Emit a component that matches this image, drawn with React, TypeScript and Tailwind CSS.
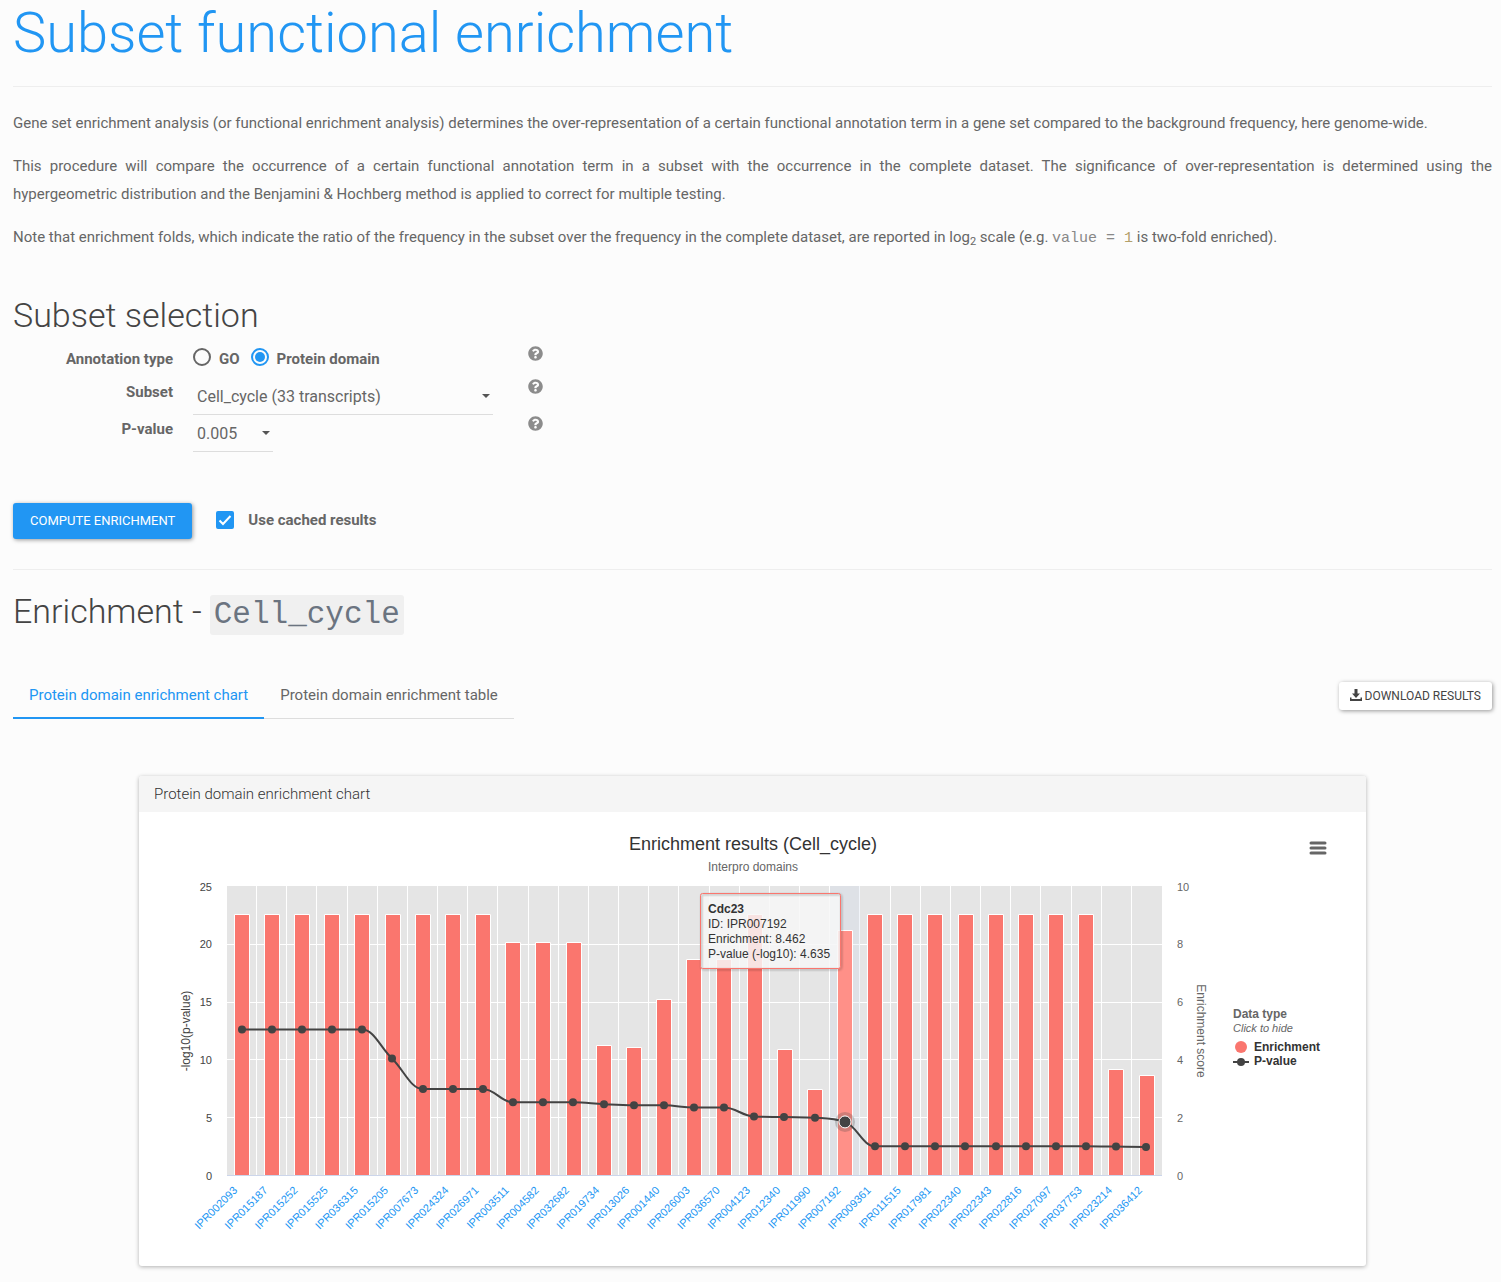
import { useState } from 'react';
import { FaQuestionCircle } from 'react-icons/fa';

type Domain = { id: string; enrichment: number; pValue: number };

const DOMAINS: Domain[] = [
  { id: 'IPR002093', enrichment: 9.03, pValue: 12.63 },
  { id: 'IPR015187', enrichment: 9.03, pValue: 12.63 },
  { id: 'IPR015252', enrichment: 9.03, pValue: 12.63 },
  { id: 'IPR015525', enrichment: 9.03, pValue: 12.63 },
  { id: 'IPR036315', enrichment: 9.03, pValue: 12.63 },
  { id: 'IPR015205', enrichment: 9.03, pValue: 10.12 },
  { id: 'IPR007673', enrichment: 9.03, pValue: 7.48 },
  { id: 'IPR024324', enrichment: 9.03, pValue: 7.48 },
  { id: 'IPR026971', enrichment: 9.03, pValue: 7.48 },
  { id: 'IPR003511', enrichment: 8.05, pValue: 6.33 },
  { id: 'IPR004582', enrichment: 8.05, pValue: 6.33 },
  { id: 'IPR032682', enrichment: 8.05, pValue: 6.33 },
  { id: 'IPR019734', enrichment: 4.49, pValue: 6.16 },
  { id: 'IPR013026', enrichment: 4.42, pValue: 6.07 },
  { id: 'IPR001440', enrichment: 6.08, pValue: 6.07 },
  { id: 'IPR026003', enrichment: 7.46, pValue: 5.88 },
  { id: 'IPR036570', enrichment: 7.46, pValue: 5.88 },
  { id: 'IPR004123', enrichment: 9.03, pValue: 5.1 },
  { id: 'IPR012340', enrichment: 4.35, pValue: 5.05 },
  { id: 'IPR011990', enrichment: 2.96, pValue: 5.0 },
  { id: 'IPR007192', enrichment: 8.462, pValue: 4.635 },
  { id: 'IPR009361', enrichment: 9.03, pValue: 2.52 },
  { id: 'IPR011515', enrichment: 9.03, pValue: 2.52 },
  { id: 'IPR017981', enrichment: 9.03, pValue: 2.52 },
  { id: 'IPR022340', enrichment: 9.03, pValue: 2.52 },
  { id: 'IPR022343', enrichment: 9.03, pValue: 2.52 },
  { id: 'IPR022816', enrichment: 9.03, pValue: 2.52 },
  { id: 'IPR027097', enrichment: 9.03, pValue: 2.52 },
  { id: 'IPR037753', enrichment: 9.03, pValue: 2.52 },
  { id: 'IPR023214', enrichment: 3.66, pValue: 2.5 },
  { id: 'IPR036412', enrichment: 3.45, pValue: 2.47 },
];

const ACTIVE = 20;

const PLOT = { left: 88, top: 74, width: 935, height: 289 };
const BOTTOM = PLOT.top + PLOT.height;
const STEP = PLOT.width / DOMAINS.length;

const center = (index: number) => PLOT.left + STEP * (index + 0.5);
const scoreY = (value: number) => BOTTOM + 0.5 - (value / 10) * PLOT.height;
const pValueY = (value: number) => BOTTOM + 0.5 - (value / 25) * PLOT.height;

// Smooth line that never overshoots its neighbouring points.
function splinePath(points: { x: number; y: number }[]) {
  const smoothing = 1.5;
  const denom = smoothing + 1;
  let path = `M ${points[0].x} ${points[0].y}`;
  let handle = points[0];

  for (let i = 1; i < points.length; i++) {
    const prev = points[i - 1];
    const point = points[i];
    const next = points[i + 1];
    let left = point;
    let right = point;

    if (next) {
      const leftX = (smoothing * point.x + prev.x) / denom;
      let leftY = (smoothing * point.y + prev.y) / denom;
      const rightX = (smoothing * point.x + next.x) / denom;
      let rightY = (smoothing * point.y + next.y) / denom;
      const correction =
        ((rightY - leftY) * (rightX - point.x)) / (rightX - leftX) +
        point.y -
        rightY;
      leftY += correction;
      rightY += correction;

      if (leftY > prev.y && leftY > point.y) {
        leftY = Math.max(prev.y, point.y);
        rightY = 2 * point.y - leftY;
      } else if (leftY < prev.y && leftY < point.y) {
        leftY = Math.min(prev.y, point.y);
        rightY = 2 * point.y - leftY;
      }
      if (rightY > next.y && rightY > point.y) {
        rightY = Math.max(next.y, point.y);
        leftY = 2 * point.y - rightY;
      } else if (rightY < next.y && rightY < point.y) {
        rightY = Math.min(next.y, point.y);
        leftY = 2 * point.y - rightY;
      }
      left = { x: leftX, y: leftY };
      right = { x: rightX, y: rightY };
    }

    path += ` C ${handle.x} ${handle.y} ${left.x} ${left.y} ${point.x} ${point.y}`;
    handle = right;
  }
  return path;
}

function EnrichmentChart() {
  const [showScore, setShowScore] = useState(true);
  const [showPValue, setShowPValue] = useState(true);

  const points = DOMAINS.map((domain, i) => ({
    x: Math.floor(center(i)),
    y: pValueY(domain.pValue),
  }));
  const active = points[ACTIVE];

  return (
    <svg
      aria-label="Enrichment results (Cell_cycle)"
      className="block w-full font-['Liberation_Sans',Arial,sans-serif]"
      viewBox="0 0 1227 454"
    >
      <text className="fill-[#333] text-[18px]" textAnchor="middle" x="614" y="38">
        Enrichment results (Cell_cycle)
      </text>
      <text className="fill-[#666] text-[12px]" textAnchor="middle" x="614" y="59">
        Interpro domains
      </text>

      <rect
        fill="#e5e5e5"
        height={PLOT.height}
        width={PLOT.width}
        x={PLOT.left}
        y={PLOT.top}
      />
      <g stroke="#fff">
        {DOMAINS.slice(1).map((domain, i) => {
          const x = Math.round(PLOT.left + STEP * (i + 1)) - 0.5;
          return <line key={domain.id} x1={x} x2={x} y1={PLOT.top} y2={BOTTOM} />;
        })}
        {[5, 10, 15, 20].map((tick) => {
          const y = Math.floor(pValueY(tick)) + 0.5;
          return (
            <line
              key={tick}
              x1={PLOT.left}
              x2={PLOT.left + PLOT.width}
              y1={y}
              y2={y}
            />
          );
        })}
      </g>
      <rect
        fill="#ccd6eb"
        fillOpacity="0.25"
        height={PLOT.height}
        width="30"
        x={Math.floor(center(ACTIVE) - 15)}
        y={PLOT.top}
      />
      <line
        stroke="#ccd6eb"
        x1={PLOT.left}
        x2={PLOT.left + PLOT.width}
        y1={BOTTOM + 0.5}
        y2={BOTTOM + 0.5}
      />

      {showScore &&
        DOMAINS.map((domain, i) => {
          const x = Math.floor(center(i) - 7.8) + 0.5;
          const y = Math.floor(scoreY(domain.enrichment)) + 0.5;
          return (
            <g key={domain.id}>
              <rect
                fill={i === ACTIVE ? '#ff9088' : '#fa766e'}
                height={BOTTOM - y}
                width="15"
                x={x}
                y={y}
              />
              <path
                d={`M ${x} ${BOTTOM} V ${y} H ${x + 15} V ${BOTTOM}`}
                fill="none"
                stroke="#fff"
              />
            </g>
          );
        })}

      {showPValue && (
        <g>
          <path
            d={splinePath(points)}
            fill="none"
            stroke="#434343"
            strokeWidth="2"
          />
          {points.map((point) => (
            <circle cx={point.x} cy={point.y} fill="#434343" key={point.x} r="4" />
          ))}
          <circle
            cx={active.x}
            cy={active.y}
            fill="#434343"
            fillOpacity="0.25"
            r="10"
          />
          <circle
            cx={active.x}
            cy={active.y}
            fill="#434343"
            r="6"
            stroke="#fff"
          />
        </g>
      )}

      <g className="fill-[#444] text-[11px]" textAnchor="end">
        {[0, 5, 10, 15, 20, 25].map((tick) => (
          <text key={tick} x="73" y={Math.round(pValueY(tick)) + 4}>
            {tick}
          </text>
        ))}
      </g>
      <g className="fill-[#666] text-[11px]">
        {[0, 2, 4, 6, 8, 10].map((tick) => (
          <text key={tick} x="1038" y={Math.round(scoreY(tick)) + 4}>
            {tick}
          </text>
        ))}
      </g>
      <text
        className="fill-[#444] text-[12px]"
        textAnchor="middle"
        transform="translate(51 219) rotate(-90)"
      >
        -log10(p-value)
      </text>
      <text
        className="fill-[#666] text-[12px]"
        textAnchor="middle"
        transform="translate(1058 219) rotate(90)"
      >
        Enrichment score
      </text>

      <g className="fill-[#2196f3] text-[11px]" textAnchor="end">
        {DOMAINS.map((domain, i) => (
          <a href={`#${domain.id}`} key={domain.id}>
            <text transform={`translate(${center(i) - 4} 379) rotate(-45)`}>
              {domain.id}
            </text>
          </a>
        ))}
      </g>

      <g>
        <rect
          fill="#f7f7f7"
          fillOpacity="0.85"
          height="75"
          rx="2"
          width="140"
          x="561.5"
          y="81.5"
        />
        <rect
          className="drop-shadow-[1px_1px_1px_rgba(0,0,0,0.4)]"
          fill="none"
          height="75"
          rx="2"
          stroke="#fa766e"
          width="140"
          x="561.5"
          y="81.5"
        />
        <g className="fill-[#333] text-[12px]">
          <text className="font-bold" x="569" y="101">
            Cdc23
          </text>
          <text x="569" y="116">
            ID: IPR007192
          </text>
          <text x="569" y="131">
            Enrichment: 8.462
          </text>
          <text x="569" y="146">
            P-value (-log10): 4.635
          </text>
        </g>
      </g>

      <foreignObject height="64" width="110" x="1094" y="195">
        <div className="flex flex-col items-start text-[12px] leading-[14px] text-[#333]">
          <strong className="text-[#666]">Data type</strong>
          <em className="mb-[5px] text-[11px] text-[#666]">Click to hide</em>
          <button
            className="flex items-center gap-1 font-bold"
            onClick={() => setShowScore(!showScore)}
            type="button"
          >
            <svg className="h-3.5 w-[17px]" viewBox="0 0 17 14">
              <circle cx="8" cy="7" fill="#fa766e" r="6" />
            </svg>
            Enrichment
          </button>
          <button
            className="flex items-center gap-1 font-bold"
            onClick={() => setShowPValue(!showPValue)}
            type="button"
          >
            <svg className="h-3.5 w-[17px]" viewBox="0 0 17 14">
              <path d="M0 8h16" stroke="#434343" strokeWidth="2" />
              <circle cx="8" cy="8" fill="#434343" r="4" />
            </svg>
            P-value
          </button>
        </div>
      </foreignObject>

      <foreignObject height="24" width="26" x="1166" y="24">
        <button
          aria-label="Chart context menu"
          className="flex h-6 w-[26px] items-center justify-center"
          type="button"
        >
          <svg className="h-[14px] w-[18px]" viewBox="0 0 18 14">
            <path
              d="M2 2h14M2 7h14M2 12h14"
              stroke="#666"
              strokeLinecap="round"
              strokeWidth="3"
            />
          </svg>
        </button>
      </foreignObject>
    </svg>
  );
}

function Caret() {
  return (
    <svg
      aria-hidden="true"
      className="pointer-events-none absolute top-4 right-[3px] h-1 w-2"
      viewBox="0 0 8 4"
    >
      <path d="M0 0h8L4 4z" fill="#555" />
    </svg>
  );
}

function HelpIcon({ title }: { title: string }) {
  return (
    <button
      aria-label={title}
      className="mt-px ml-auto h-[15px] w-[15px] text-[#8c8c8c]"
      title={title}
      type="button"
    >
      <FaQuestionCircle className="h-[15px] w-[15px]" />
    </button>
  );
}

const radioClass =
  'mt-[3px] h-[18px] w-[18px] appearance-none rounded-full border-2 border-[#666] checked:border-[#2196f3] checked:bg-[#2196f3] checked:bg-clip-content checked:p-0.5';

const selectClass =
  'h-[37px] w-full appearance-none border-b border-[#ddd] bg-transparent pt-0.5 pl-1 text-[16px] text-[#666] outline-none';

export default function App() {
  const [annotation, setAnnotation] = useState('domain');
  const [cached, setCached] = useState(true);
  const [tab, setTab] = useState('chart');

  return (
    <div className="min-h-screen bg-[#fcfcfc] pt-px pr-[9px] pb-4 pl-[13px] font-[Roboto,sans-serif] text-[15px] leading-7 text-[#666]">
      <h1 className="text-[56px] leading-[64px] font-light text-[#2196f3]">
        Subset functional enrichment
      </h1>
      <hr className="mt-[21px] mb-[22px] border-[#eee]" />

      <div className="space-y-[15px] text-justify">
        <p>
          Gene set enrichment analysis (or functional enrichment analysis)
          determines the over-representation of a certain functional annotation
          term in a gene set compared to the background frequency, here
          genome-wide.
        </p>
        <p>
          This procedure will compare the occurrence of a certain functional
          annotation term in a subset with the occurrence in the complete
          dataset. The significance of over-representation is determined using
          the{' '}
          <span className="whitespace-nowrap">hypergeometric distribution</span>{' '}
          and the Benjamini &amp; Hochberg method is applied to correct for
          multiple testing.
        </p>
        <p>
          Note that enrichment folds, which indicate the ratio of the frequency
          in the subset over the frequency in the complete dataset, are reported
          in log<sub className="text-[11px]">2</sub> scale (e.g.{' '}
          <code className="font-['Liberation_Mono',monospace] text-[15px] text-[#888]">
            value = <span className="text-[#b3a06a]">1</span>
          </code>{' '}
          is two-fold enriched).
        </p>
      </div>

      <h2 className="mt-[42px] text-[34px] leading-10 font-light text-[#444]">
        Subset selection
      </h2>
      <form onSubmit={(event) => event.preventDefault()}>
        <div className="mt-2.5 w-[530px]">
          <div className="flex h-[33px] items-start">
            <span className="mr-5 w-40 text-right font-bold">
              Annotation type
            </span>
            <label className="mr-[11px] flex gap-2 font-bold">
              <input
                checked={annotation === 'go'}
                className={radioClass}
                name="annotation"
                onChange={() => setAnnotation('go')}
                type="radio"
              />
              GO
            </label>
            <label className="flex gap-2 font-bold">
              <input
                checked={annotation === 'domain'}
                className={radioClass}
                name="annotation"
                onChange={() => setAnnotation('domain')}
                type="radio"
              />
              Protein domain
            </label>
            <HelpIcon title="Annotation type" />
          </div>
          <div className="flex items-start">
            <label className="mr-5 w-40 text-right font-bold" htmlFor="subset">
              Subset
            </label>
            <div className="relative h-[37px] w-[300px]">
              <select className={selectClass} id="subset">
                <option>Cell_cycle (33 transcripts)</option>
              </select>
              <Caret />
            </div>
            <HelpIcon title="Subset" />
          </div>
          <div className="flex items-start">
            <label className="mr-5 w-40 text-right font-bold" htmlFor="p-value">
              P-value
            </label>
            <div className="relative h-[37px] w-20">
              <select className={selectClass} defaultValue="0.005" id="p-value">
                <option>0.05</option>
                <option>0.01</option>
                <option>0.005</option>
                <option>0.001</option>
              </select>
              <Caret />
            </div>
            <HelpIcon title="P-value" />
          </div>
        </div>

        <div className="mt-[51px] flex items-center">
          <button
            className="h-9 rounded-[3px] bg-[#2196f3] px-[17px] text-[13px] text-white uppercase shadow-[1px_1px_4px_rgba(0,0,0,0.4)]"
            type="submit"
          >
            Compute enrichment
          </button>
          <label className="ml-6 flex items-center gap-3.5 pb-0.5 font-bold">
            <span className="relative flex">
              <input
                checked={cached}
                className="h-[18px] w-[18px] appearance-none rounded-[2px] border-2 border-[#666] checked:border-[#2196f3] checked:bg-[#2196f3]"
                onChange={() => setCached(!cached)}
                type="checkbox"
              />
              <svg
                aria-hidden="true"
                className="pointer-events-none absolute inset-0"
                viewBox="0 0 18 18"
              >
                <path
                  d="M3.5 9.5l3.5 3.5 7.5-8"
                  fill="none"
                  stroke="#fff"
                  strokeWidth="2"
                />
              </svg>
            </span>
            Use cached results
          </label>
        </div>
      </form>

      <hr className="mt-[30px] mb-[25px] border-[#eee]" />
      <h2 className="flex items-center gap-2 text-[34px] leading-10 font-light text-[#444]">
        <span className="-mt-2">Enrichment -</span>
        <code className="h-10 rounded-[3px] bg-[#f0f0f0] px-1 font-['Liberation_Mono',monospace] text-[31px] leading-10 font-normal text-[#6b7480]">
          Cell_cycle
        </code>
      </h2>

      <div className="mt-9 flex items-start justify-between">
        <div className="flex" role="tablist">
          {[
            { key: 'chart', label: 'Protein domain enrichment chart' },
            { key: 'table', label: 'Protein domain enrichment table' },
          ].map(({ key, label }) => (
            <button
              aria-selected={tab === key}
              className={`h-12 px-4 pt-0.5 ${
                tab === key
                  ? 'border-b-2 border-[#2196f3] text-[#2196f3]'
                  : 'border-b border-[#ddd] pb-px text-[#666]'
              }`}
              key={key}
              onClick={() => setTab(key)}
              role="tab"
              type="button"
            >
              {label}
            </button>
          ))}
        </div>
        <button
          className="mt-[11px] flex h-7 items-center gap-[3px] rounded-[3px] bg-white px-[11px] text-[12px] text-[#444] uppercase shadow-[1px_1px_4px_rgba(0,0,0,0.4)]"
          type="button"
        >
          <svg
            aria-hidden="true"
            className="mb-0.5 h-3 w-3"
            fill="currentColor"
            viewBox="0 0 12 12"
          >
            <path d="M4.5 0h3v4.5H10L6 9 2 4.5h2.5zM0 8.5h1.5V10h9V8.5H12V12H0z" />
          </svg>
          Download results
        </button>
      </div>

      <section className="mx-[126px] mt-[57px] overflow-hidden rounded-[3px] bg-white shadow-[0_1px_4px_rgba(0,0,0,0.3)]">
        <h3 className="h-9 bg-[#f5f5f5] px-[15px] text-[15px] leading-9 font-light text-[#333]">
          Protein domain enrichment chart
        </h3>
        <EnrichmentChart />
      </section>
    </div>
  );
}
